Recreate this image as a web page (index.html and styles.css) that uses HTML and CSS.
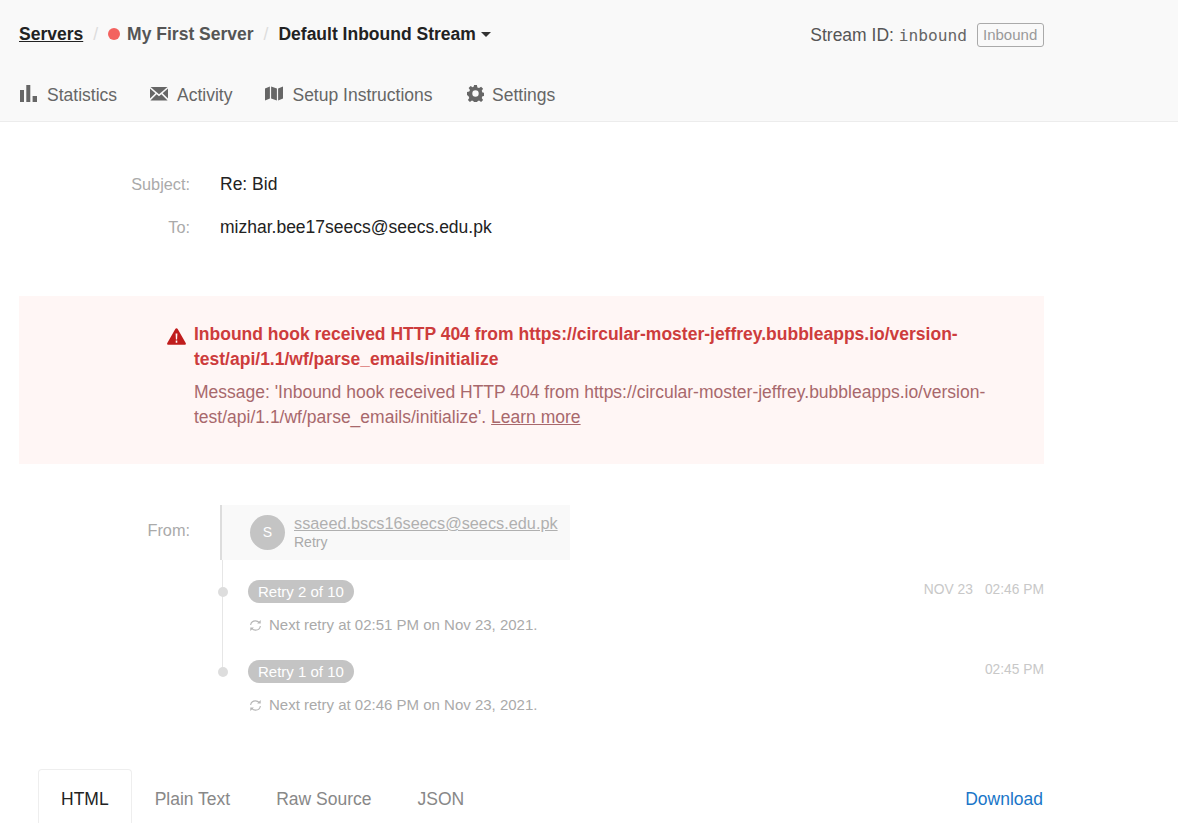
FILE: index.html
```html
<!DOCTYPE html>
<html lang="en">
<head>
<meta charset="utf-8">
<title>Inbound Stream</title>
<link rel="stylesheet" href="styles.css">
</head>
<body>
<header class="header">
  <div class="top-row">
    <nav class="crumbs">
      <a class="crumb-link" href="#">Servers</a>
      <span class="sep">/</span>
      <span class="dot"></span>
      <span class="crumb-server">My First Server</span>
      <span class="sep sep-2">/</span>
      <span class="crumb-current">Default Inbound Stream</span>
      <span class="caret"></span>
    </nav>
    <div class="stream-id">
      <span>Stream ID: <code class="code">inbound</code></span>
      <span class="tag">Inbound</span>
    </div>
  </div>
  <nav class="tabs-main">
    <a class="main-tab tab-stat" href="#">
      <svg class="ico" width="17" height="17" viewBox="0 0 17 17"><rect x="0" y="5" width="4" height="12" fill="#666"/><rect x="6.300" y="0" width="4" height="17" fill="#666"/><rect x="12.600" y="11" width="4.400" height="6" fill="#666"/></svg>
      Statistics</a>
    <a class="main-tab tab-act" href="#">
      <svg class="ico ico-up" width="18" height="14" viewBox="0 0 18 14"><path d="M0.500 0H17.500L9 7.200Z" fill="#666"/><path d="M0 1.600L5.400 6.200L0 11.600Z" fill="#666"/><path d="M18 1.600L12.600 6.200L18 11.600Z" fill="#666"/><path d="M6.600 7.200L9 9.200L11.400 7.200L17.600 13.600H0.400Z" fill="#666"/></svg>
      Activity</a>
    <a class="main-tab tab-setup" href="#">
      <svg class="ico ico-up" width="18" height="15" viewBox="0 0 18 15"><path d="M0 2.600L4.900 0.400V12.400L0 14.600Z" fill="#666"/><path d="M6.100 0.400L11.900 2.600V14.600L6.100 12.400Z" fill="#666"/><path d="M13.100 2.600L18 0.400V12.400L13.100 14.600Z" fill="#666"/></svg>
      Setup Instructions</a>
    <a class="main-tab tab-set" href="#">
      <svg class="ico ico-gear" width="17" height="17" viewBox="0 0 24 24"><path fill="#666" fill-rule="evenodd" d="M10 0h4l.7 3.400 2.300 1 2.900-1.900 2.800 2.800-1.900 2.900 1 2.300 3.200.7v4l-3.200.7-1 2.300 1.900 2.900-2.800 2.800-2.900-1.900-2.300 1-.7 3H10l-.7-3-2.300-1-2.900 1.900-2.800-2.800 1.900-2.900-1-2.300L0 14v-4l3.200-.7 1-2.300-1.900-2.900L5.100 1.300 8 3.200l1.300-.6zM12 7.500a4.500 4.500 0 1 0 0 9 4.500 4.500 0 0 0 0-9z"/></svg>
      Settings</a>
  </nav>
</header>
<main class="content">
  <dl class="meta">
    <div class="meta-row"><dt class="meta-label">Subject:</dt><dd class="meta-value">Re: Bid</dd></div>
    <div class="meta-row"><dt class="meta-label">To:</dt><dd class="meta-value">mizhar.bee17seecs@seecs.edu.pk</dd></div>
  </dl>
  <section class="alert">
    <svg class="alert-ico" width="19" height="17" viewBox="0 0 19 17"><path fill="#c01c1c" fill-rule="evenodd" d="M9.500 0.300c.5 0 .9.3 1.200.8l8 14c.5.9-.1 1.600-1 1.600H1.300c-.9 0-1.500-.7-1-1.600l8-14c.3-.5.7-.8 1.200-.8zM8.600 5.500l.3 6h1.200l.3-6zM8.700 12.600v2.100h1.600v-2.100z"/></svg>
    <div class="alert-body">
      <h2 class="alert-title">Inbound hook received HTTP 404 from https://circular-moster-jeffrey.bubbleapps.io/version-test/api/1.1/wf/parse_emails/initialize</h2>
      <p class="alert-text">Message: 'Inbound hook received HTTP 404 from https://circular-moster-jeffrey.bubbleapps.io/version-test/api/1.1/wf/parse_emails/initialize'. <a class="alert-link" href="#">Learn more</a></p>
    </div>
  </section>
  <section class="from">
    <div class="from-label">From:</div>
    <div class="sender">
      <div class="avatar">S</div>
      <div class="sender-text">
        <a class="sender-mail" href="#">ssaeed.bscs16seecs@seecs.edu.pk</a>
        <div class="sender-sub">Retry</div>
      </div>
    </div>
  </section>
  <section class="timeline">
    <article class="event">
      <span class="event-dot"></span>
      <div class="event-top">
        <span class="pill">Retry 2 of 10</span>
        <span class="event-time"><span class="event-date">NOV 23</span>02:46 PM</span>
      </div>
      <p class="event-note">
        <svg class="retry-ico" width="13" height="13" viewBox="0 0 12 12"><path fill="none" stroke="#b5b5b5" stroke-width="1" d="M1.500 5.500C1.800 3.300 3.600 1.700 6 1.700c1.500 0 2.600.6 3.500 1.700M10.500 6.500c-.3 2.200-2.100 3.800-4.500 3.800-1.500 0-2.600-.6-3.500-1.700"/><path fill="#b5b5b5" d="M10.800.9v3.300H7.500zM1.200 11.100V7.800h3.300z"/></svg>
        Next retry at 02:51 PM on Nov 23, 2021.</p>
    </article>
    <article class="event">
      <span class="event-dot"></span>
      <div class="event-top">
        <span class="pill">Retry 1 of 10</span>
        <span class="event-time">02:45 PM</span>
      </div>
      <p class="event-note">
        <svg class="retry-ico" width="13" height="13" viewBox="0 0 12 12"><path fill="none" stroke="#b5b5b5" stroke-width="1" d="M1.500 5.500C1.800 3.300 3.600 1.700 6 1.700c1.500 0 2.600.6 3.500 1.700M10.500 6.500c-.3 2.200-2.100 3.800-4.500 3.800-1.500 0-2.600-.6-3.500-1.700"/><path fill="#b5b5b5" d="M10.800.9v3.300H7.500zM1.200 11.100V7.800h3.300z"/></svg>
        Next retry at 02:46 PM on Nov 23, 2021.</p>
    </article>
  </section>
  <nav class="tabs-msg">
    <a class="msg-tab active" href="#">HTML</a>
    <a class="msg-tab" href="#">Plain Text</a>
    <a class="msg-tab" href="#">Raw Source</a>
    <a class="msg-tab" href="#">JSON</a>
    <a class="download" href="#">Download</a>
  </nav>
</main>
</body>
</html>
```
FILE: styles.css
```css
* { box-sizing: border-box; }
html, body { margin: 0; padding: 0; height: 823px; overflow: hidden; }
body { background: #fff; font-family: "Liberation Sans", Arial, sans-serif; font-size: 17.5px; color: #222; }
a { color: inherit; }
.header { height: 122px; background: #f9f9f9; border-bottom: 1px solid #ececec; padding: 0 134px 0 19px; }
.top-row { height: 70px; display: flex; justify-content: space-between; align-items: flex-start; padding-top: 22px; }
.crumbs { display: flex; align-items: center; height: 24px; font-weight: 700; }
.crumb-link { color: #222; }
.sep { color: #ddd; font-weight: 400; margin: 0 10px; }
.dot { width: 12px; height: 12px; border-radius: 50%; background: #f3625f; margin-right: 7px; }
.crumb-server { color: #555; }
.crumb-current { color: #222; }
.caret { width: 0; height: 0; border: 5px solid transparent; border-top-color: #333; border-bottom: 0; margin-left: 5px; }
.stream-id { display: flex; align-items: center; gap: 10px; height: 26px; color: #555; }
.code { font-family: "DejaVu Sans Mono", monospace; font-size: 16.2px; color: #666; }
.tag { border: 1px solid #aaa; border-radius: 3px; font-size: 15px; color: #999; padding: 2px 5px; width: 67px; height: 24px; line-height: 18px; }
.tabs-main { display: flex; height: 51px; color: #666; align-items: flex-start; }
.main-tab { display: flex; align-items: center; gap: 9px; height: 24px; margin-top: 13px; text-decoration: none; color: #666; }
.ico { flex: none; }
.ico-up { margin-top: -3px; }
.ico-gear { margin-top: -4px; }
.tab-stat { margin-left: 1px; gap: 10px; }
.tab-stat .ico { margin-top: -3px; }
.tab-act, .tab-setup { margin-left: 33px; }
.tab-set { margin-left: 34.5px; gap: 8px; }
.content { padding: 0 134px 0 19px; }
.meta { margin: 0; padding-top: 50px; height: 174px; }
.meta-row { display: flex; height: 43px; align-items: flex-start; }
.meta-label { width: 171px; text-align: right; font-size: 16.3px; color: #aaa; line-height: 24px; }
.meta-value { margin: 0 0 0 30px; font-size: 17.5px; line-height: 24px; color: #222; }
.alert { background: #fff6f5; height: 168px; padding: 26px 50px 0 148px; display: flex; gap: 8px; }
.alert-ico { flex: none; margin-top: 6px; }
.alert-title { margin: 0; font-size: 17.5px; line-height: 25px; font-weight: 700; color: #cd3c3c; }
.alert-text { margin: 8px 0 0; line-height: 25px; color: #a8686c; }
.alert-link { color: #a8686c; }
.from { display: flex; margin-top: 41px; height: 55px; }
.from-label { width: 171px; text-align: right; font-size: 16.3px; color: #aaa; line-height: 24px; padding-top: 13px; }
.sender { margin-left: 30px; width: 350px; display: flex; background: #f9f9f9; border-left: 2px solid #ddd; padding: 10px 0 0 28px; gap: 9px; }
.avatar { width: 35px; height: 35px; border-radius: 50%; background: #c4c4c4; color: #fff; font-size: 14px; text-align: center; line-height: 35px; }
.sender-mail { display: block; font-size: 16.3px; line-height: 16px; color: #b0b0b0; }
.sender-sub { font-size: 14px; line-height: 19px; margin-top: 2px; color: #aaa; }
.timeline { position: relative; margin-left: 203px; height: 160px; padding-left: 26px; }
.timeline::before { content: ""; position: absolute; left: 0; top: 0; width: 1px; height: 112px; background: #e6e6e6; }
.event { position: relative; height: 80px; padding-top: 20px; }
.event-dot { position: absolute; left: -30px; top: 27px; width: 10px; height: 10px; border-radius: 50%; background: #ddd; }
.event-top { display: flex; justify-content: space-between; align-items: flex-start; height: 23px; }
.pill { background: #c4c4c4; color: #fff; font-size: 15px; border-radius: 12px; height: 23px; line-height: 23px; padding: 0 10px; }
.event-time { font-size: 13.8px; color: #c8c8c8; line-height: 20px; }
.event-date { margin-right: 12px; }
.event-note { margin: 12px 0 0; font-size: 15px; line-height: 20px; color: #aaa; display: flex; align-items: center; gap: 7px; }
.retry-ico { flex: none; margin-left: 1px; }
.tabs-msg { display: flex; align-items: flex-start; padding-left: 19px; margin-top: 49px; height: 60px; }
.msg-tab { padding: 0 22px; height: 60px; line-height: 58px; text-decoration: none; color: #888; border: 1px solid transparent; border-bottom: 0; border-radius: 4px 4px 0 0; }
.msg-tab.active { color: #222; border-color: #eee; }
.download { margin: 1px 1px 0 auto; line-height: 58px; color: #1a76c8; text-decoration: none; }
```
